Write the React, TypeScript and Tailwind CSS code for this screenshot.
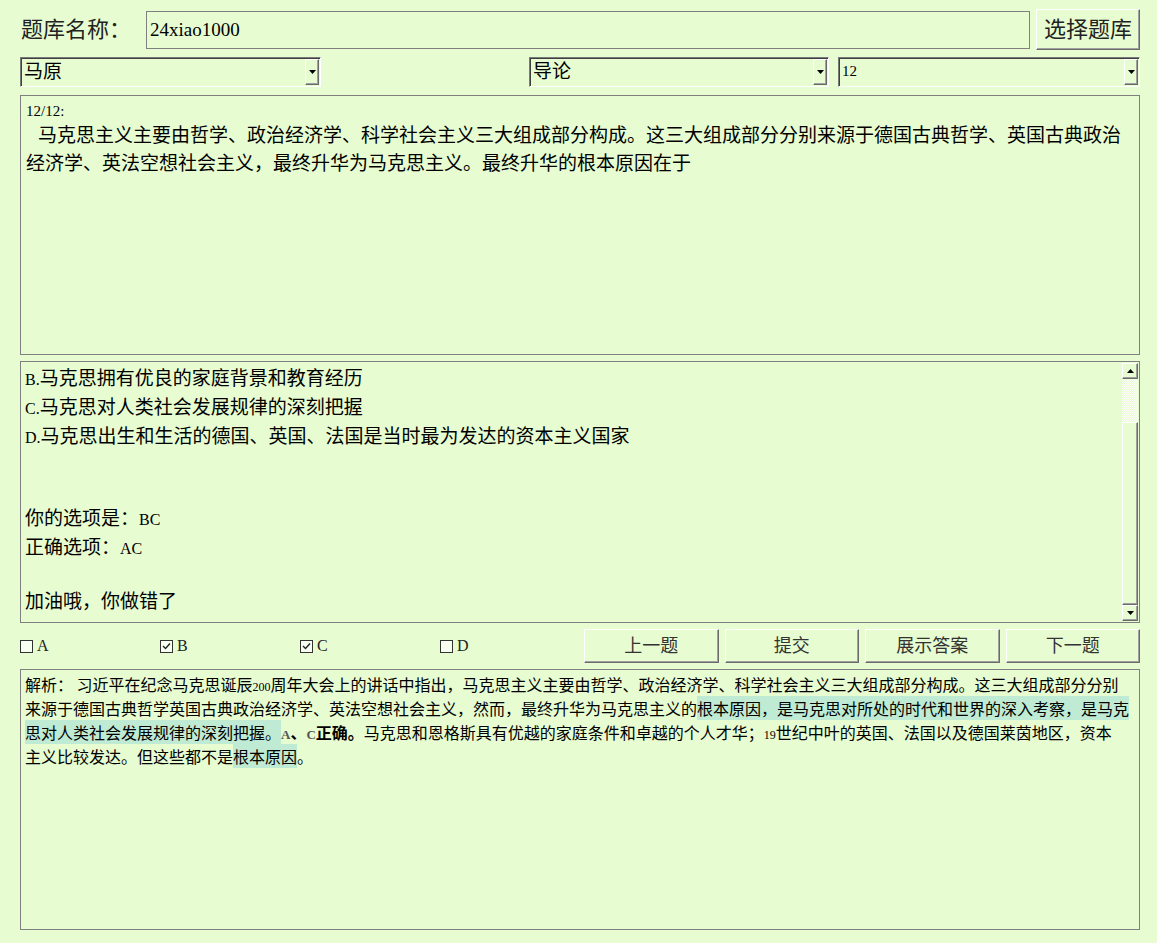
import React from "react";

const SERIF = "font-['Liberation_Serif','Noto_Sans_CJK_SC',serif]";
const SANS = "font-['Noto_Sans_CJK_SC','Liberation_Sans',sans-serif]";

function ArrowDown() {
  return (
    <svg width="7" height="4" viewBox="0 0 7 4">
      <path d="M0 0h7L3.5 4z" fill="#000" />
    </svg>
  );
}

function ArrowUp() {
  return (
    <svg width="7" height="4" viewBox="0 0 7 4">
      <path d="M0 4h7L3.5 0z" fill="#000" />
    </svg>
  );
}

function Raised({ className = "", children }: { className?: string; children?: React.ReactNode }) {
  return (
    <div
      className={`flex items-center justify-center border border-t-white border-l-white border-r-[#6b6b6b] border-b-[#6b6b6b] shadow-[inset_-1px_-1px_0_#a0a0a0] ${className}`}
    >
      {children}
    </div>
  );
}

function Select({ value, width, small }: { value: string; width: string; small?: boolean }) {
  return (
    <div
      className={`flex h-[30px] ${width} border border-t-[#7a7a7a] border-l-[#7a7a7a] border-r-white border-b-white shadow-[inset_1px_1px_0_#404040]`}
    >
      <span
        className={`flex-1 pl-[3px] leading-none text-black ${
          small ? `${SERIF} pt-[6px] text-[15px]` : `${SANS} pt-[2px] text-[19px]`
        }`}
      >
        {value}
      </span>
      <Raised className="mr-[1px] mt-[1px] h-[26px] w-[14px]">
        <ArrowDown />
      </Raised>
    </div>
  );
}

function Check({ label, checked }: { label: string; checked?: boolean }) {
  return (
    <div className="flex w-[140px] items-center">
      <div className="flex h-[13px] w-[13px] items-center justify-center border border-[#333] bg-[#f7fff0]">
        {checked && (
          <svg width="9" height="8" viewBox="0 0 9 8">
            <path d="M1 4l2.5 2.5L8 1.5" fill="none" stroke="#222" strokeWidth="1.4" />
          </svg>
        )}
      </div>
      <span className={`${SERIF} ml-[4px] text-[16px] leading-none text-[#222]`}>{label}</span>
    </div>
  );
}

function Btn({ label }: { label: string }) {
  return (
    <Raised className={`h-[34px] ${SANS} text-[18px] text-[#333]`}>
      <span className="-mt-[3px]">{label}</span>
    </Raised>
  );
}

const hl = "inline-block h-[24px] bg-[#bfead3] align-top leading-[24px]";
const optLine = "h-[29px] whitespace-nowrap leading-[29px]";
const anaLine = "h-[24px] whitespace-nowrap leading-[24px]";
const num = `${SERIF} text-[12px] leading-none`;
const optNum = `${SERIF} text-[16px] leading-none`;

export default function App() {
  return (
    <div className="min-h-[943px] w-[1157px] bg-[#e7fcd1] pl-[20px] pr-[17px] pt-[9px]">
      {/* row 1 */}
      <div className="flex h-[41px] items-start">
        <span className={`${SANS} w-[126px] pl-[1px] pt-[3px] text-[22px] leading-[30px] text-[#222]`}>
          题库名称：
        </span>
        <div className="mt-[2px] flex h-[38px] flex-1 items-center border border-[#808080] pl-[3px]">
          <span className={`${SERIF} text-[19px] text-black`}>24xiao1000</span>
        </div>
        <Raised className={`ml-[6px] h-[41px] w-[104px] ${SANS} text-[22px] text-[#222]`}>
          <span className="-mt-[4px]">选择题库</span>
        </Raised>
      </div>

      {/* row 2 */}
      <div className="mt-[7px] flex">
        <Select value="马原" width="w-[301px]" />
        <div className="flex-1" />
        <Select value="导论" width="w-[300px]" />
        <div className="w-[9px]" />
        <Select value="12" width="w-[302px]" small />
      </div>

      {/* question */}
      <div className="mt-[8px] h-[260px] border border-[#808080] px-[5px] pt-[6px]">
        <div className={`${SERIF} text-[15px] leading-[18px] text-black`}>12/12:</div>
        <div className={`${SANS} text-[19px] text-black`}>
          <div className="flex h-[28px] items-center whitespace-nowrap pl-[12px]">
            马克思主义主要由哲学、政治经济学、科学社会主义三大组成部分构成。这三大组成部分分别来源于德国古典哲学、英国古典政治
          </div>
          <div className="flex h-[28px] items-center whitespace-nowrap">
            经济学、英法空想社会主义，最终升华为马克思主义。最终升华的根本原因在于
          </div>
        </div>
      </div>

      {/* options */}
      <div className="mt-[6px] flex h-[262px] border border-[#808080]">
        <div className={`${SANS} flex-1 pl-[4px] text-[19px] text-black`}>
          <div className={optLine}>
            <span className={optNum}>B.</span>马克思拥有优良的家庭背景和教育经历
          </div>
          <div className={optLine}>
            <span className={optNum}>C.</span>马克思对人类社会发展规律的深刻把握
          </div>
          <div className={optLine}>
            <span className={optNum}>D.</span>马克思出生和生活的德国、英国、法国是当时最为发达的资本主义国家
          </div>
          <div className={`${optLine} mt-[53px]`}>
            你的选项是：<span className={optNum}>BC</span>
          </div>
          <div className={optLine}>
            正确选项：<span className={optNum}>AC</span>
          </div>
          <div className={`${optLine} mt-[25px]`}>加油哦，你做错了</div>
        </div>
        <div className="flex w-[17px] flex-col py-[1px] pr-[1px]">
          <Raised className="h-[16px] w-full">
            <ArrowUp />
          </Raised>
          <div className="h-[43px] w-full bg-[repeating-conic-gradient(#ffffff_0%_25%,#e7fcd1_0%_50%)] bg-[length:2px_2px]" />
          <Raised className="w-full flex-1" />
          <Raised className="h-[16px] w-full">
            <ArrowDown />
          </Raised>
        </div>
      </div>

      {/* controls */}
      <div className="mt-[6px] flex h-[34px] items-center">
        <div className="flex flex-1 items-center">
          <Check label="A" />
          <Check label="B" checked />
          <Check label="C" checked />
          <Check label="D" />
        </div>
        <div className="grid w-[556px] grid-cols-4 gap-[6px]">
          <Btn label="上一题" />
          <Btn label="提交" />
          <Btn label="展示答案" />
          <Btn label="下一题" />
        </div>
      </div>

      {/* analysis */}
      <div
        className={`${SANS} mt-[6px] h-[261px] border border-[#808080] pl-[4px] pr-[8px] pt-[2px] text-[16px] text-black`}
      >
        <div className={anaLine}>
          解析：&nbsp;习近平在纪念马克思诞辰<span className={num}>200</span>
          周年大会上的讲话中指出，马克思主义主要由哲学、政治经济学、科学社会主义三大组成部分构成。这三大组成部分分别
        </div>
        <div className={anaLine}>
          来源于德国古典哲学英国古典政治经济学、英法空想社会主义，然而，最终升华为马克思主义的
          <span className={hl}>根本原因，是马克思对所处的时代和世界的深入考察，是马克</span>
        </div>
        <div className={anaLine}>
          <span className={hl}>思对人类社会发展规律的深刻把握。</span>
          <span className={`${SERIF} text-[13px] font-bold leading-none text-[#555]`}>A</span>
          <span className="font-bold">、</span>
          <span className={`${SERIF} text-[13px] font-bold leading-none text-[#555]`}>C</span>
          <span className="font-bold">正确。</span>
          马克思和恩格斯具有优越的家庭条件和卓越的个人才华；<span className={num}>19</span>
          世纪中叶的英国、法国以及德国莱茵地区，资本
        </div>
        <div className={anaLine}>
          主义比较发达。但这些都不是<span className={hl}>根本原因</span>。
        </div>
      </div>
    </div>
  );
}
